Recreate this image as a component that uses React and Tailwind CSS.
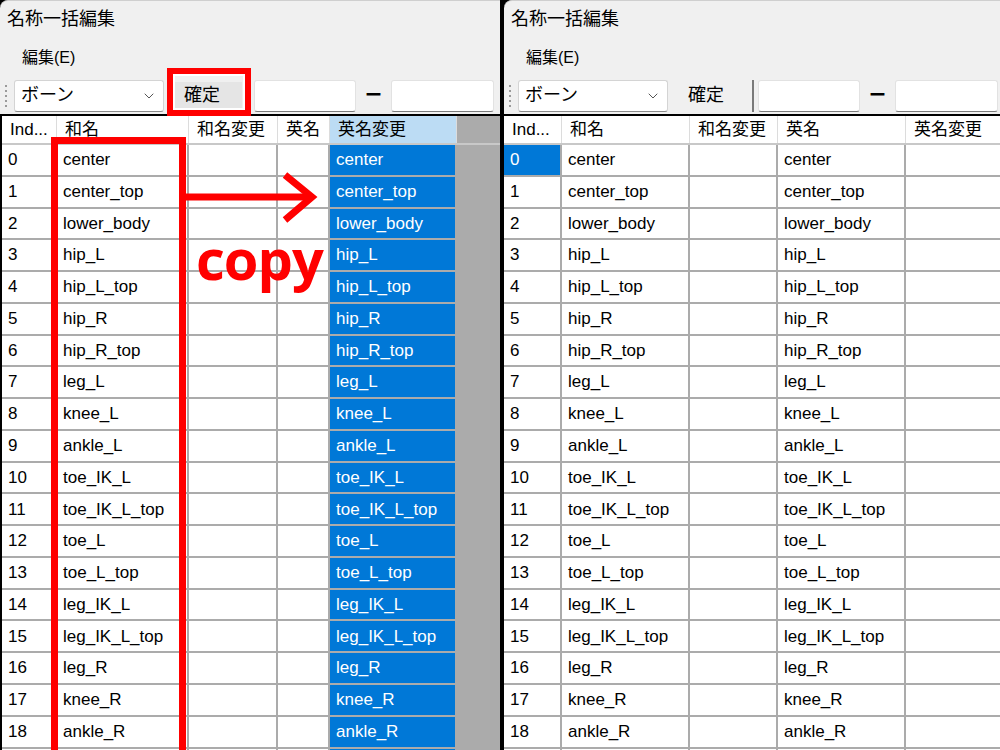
import React from 'react';
import { ChevronDown } from 'lucide-react';

const names = [
  'center', 'center_top', 'lower_body', 'hip_L', 'hip_L_top', 'hip_R', 'hip_R_top',
  'leg_L', 'knee_L', 'ankle_L', 'toe_IK_L', 'toe_IK_L_top', 'toe_L', 'toe_L_top',
  'leg_IK_L', 'leg_IK_L_top', 'leg_R', 'knee_R', 'ankle_R', '',
];

const font = { fontFamily: '"Liberation Sans", "Noto Sans CJK JP", sans-serif' };

// column sets for each window (widths written out so tailwind picks them up)
const leftCols = [
  { key: 'idx', label: 'Ind...', w: 'w-[55px]' },
  { key: 'ja', label: '和名', w: 'w-[132px]' },
  { key: 'jaNew', label: '和名変更', w: 'w-[89px]' },
  { key: 'en', label: '英名', w: 'w-[52px]' },
  { key: 'enNew', label: '英名変更', w: 'w-[127px]', selected: true },
];

const rightCols = [
  { key: 'idx', label: 'Ind...', w: 'w-[58px]' },
  { key: 'ja', label: '和名', w: 'w-[128px]' },
  { key: 'jaNew', label: '和名変更', w: 'w-[88px]' },
  { key: 'en', label: '英名', w: 'w-[128px]' },
  { key: 'enNew', label: '英名変更', w: 'w-[110px]' },
];

const Grip = () => (
  <div className="flex flex-col gap-[3px] ml-[5px] mr-[7px]">
    {[0, 1, 2, 3, 4].map((i) => (
      <div key={i} className="w-[2px] h-[2px] bg-[#9a9a9a]" />
    ))}
  </div>
);

const Toolbar = ({ hover }) => (
  <div className="h-[37px] flex items-center shrink-0">
    <Grip />
    <div className="w-[150px] h-[32px] bg-white border border-[#d4d4d4] border-b-[#8a8a8a] rounded-[3px] flex items-center justify-between pl-[6px] pr-[6px]">
      <span className="text-[18px] text-black">ボーン</span>
      <ChevronDown className="w-4 h-4 text-[#555]" strokeWidth={1.5} />
    </div>
    <div className={`ml-[10px] w-[68px] h-[28px] flex items-center pl-[10px] text-[18px] text-black ${hover ? 'bg-[#e5e5e5]' : ''}`}>確定</div>
    <div className="ml-[6px] w-[2px] h-[32px] bg-[#7a7a7a]" />
    <div className="ml-[4px] w-[102px] h-[32px] bg-white border border-[#e2e2e2] border-b-[#7a7a7a] rounded-[3px]" />
    <div className="w-[35px] flex items-center justify-center text-[17px] font-bold text-black">ー</div>
    <div className="w-[103px] h-[32px] bg-white border border-[#e2e2e2] border-b-[#7a7a7a] rounded-[3px]" />
  </div>
);

const cellValue = (side, key, i) => {
  if (!names[i]) return '';
  if (key === 'idx') return String(i);
  if (key === 'ja') return names[i];
  if (side === 'left' && key === 'enNew') return names[i];
  if (side === 'right' && key === 'en') return names[i];
  return '';
};

const Grid = ({ side, cols }) => (
  <div className={`flex-1 bg-white border-t-2 border-black overflow-hidden flex flex-col ${side === 'left' ? 'border-l-2' : ''}`}>
    {/* header */}
    <div className="h-[29px] flex shrink-0 border-b-2 border-[#c8c8c8]">
      {cols.map((c) => (
        <div
          key={c.key}
          className={`${c.w} shrink-0 h-full flex items-center px-[8px] text-[17px] text-black border-r border-[#dcdcdc] ${c.selected ? 'bg-[#bcdcf4]' : 'bg-white'}`}
        >
          {c.label}
        </div>
      ))}
      {side === 'left' && <div className="flex-1 bg-[#ababab]" />}
    </div>
    {/* rows */}
    {names.map((n, i) => (
      <div key={i} className="h-[31.78px] flex shrink-0">
        {cols.map((c) => {
          const blue = (side === 'left' && c.selected) || (side === 'right' && c.key === 'idx' && i === 0);
          return (
            <div
              key={c.key}
              className={`${c.w} shrink-0 h-full flex items-center px-[6px] text-[17px] border-r-2 border-b-2 border-[#ababab] ${blue ? 'bg-[#0078d7] text-white' : 'bg-white text-black'}`}
            >
              {cellValue(side, c.key, i)}
            </div>
          );
        })}
        {side === 'left' && <div className="flex-1 bg-[#ababab]" />}
      </div>
    ))}
  </div>
);

const Window = ({ side, cols, width }) => (
  <div className={`${width} h-[750px] bg-[#f0f0f0] flex flex-col overflow-hidden shrink-0 rounded-tl-[8px] border-t border-[#cfcfcf]`}>
    <div className="h-[37px] flex items-center pl-[7px] text-[18px] text-black shrink-0">名称一括編集</div>
    <div className="h-[39px] flex items-center pl-[22px] text-[16px] text-black shrink-0">編集(E)</div>
    <Toolbar hover={side === 'left'} />
    <Grid side={side} cols={cols} />
  </div>
);

export default function App() {
  return (
    <div className="relative w-[1000px] h-[750px] overflow-hidden bg-black flex" style={font}>
      <Window side="left" cols={leftCols} width="w-[500px]" />
      <div className="w-[4px] shrink-0 bg-black" />
      <Window side="right" cols={rightCols} width="w-[496px]" />

      {/* red annotations */}
      <div className="absolute left-[167px] top-[68px] w-[84px] h-[48px] border-[6px] border-[#ff0000]">
        <div className="w-full h-full border-2 border-white" />
      </div>
      <div className="absolute left-[51px] top-[137px] w-[135px] h-[640px] border-[7px] border-[#ff0000]" />
      <svg className="absolute left-[183px] top-[170px]" width="140" height="56" viewBox="0 0 140 56">
        <line x1="0" y1="27" x2="127" y2="27" stroke="#ff0000" strokeWidth="7" />
        <polyline points="102,5 129,27 102,50" fill="none" stroke="#ff0000" strokeWidth="7" />
      </svg>
      <div
        className="absolute left-[196px] top-[230px] text-[56px] font-bold leading-none text-[#ff0000] tracking-[-1px]"
        style={{ fontFamily: '"Open Sans", sans-serif' }}
      >
        copy
      </div>
    </div>
  );
}
